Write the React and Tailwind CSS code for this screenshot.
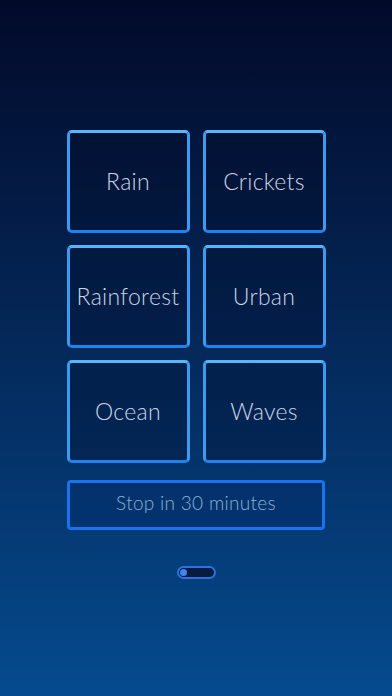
const SOUNDS = ['Rain', 'Crickets', 'Rainforest', 'Urban', 'Ocean', 'Waves']

function SoundTile({ label }) {
  return (
    <button className="flex h-[103px] items-center justify-center rounded-[5px] border-[3px] border-[#3a9bf2] border-t-[#58b6f8] border-b-[#1f82ef] bg-[#000a26]/30 text-[23px] font-light tracking-[0.3px] text-[#c9d5e8]">
      {label}
    </button>
  )
}

export default function App() {
  return (
    <div
      className="flex h-[696px] w-full flex-col items-center bg-gradient-to-b from-[#020a2a] to-[#054b8f] pt-[130px]"
      style={{ fontFamily: 'Lato, "Open Sans", sans-serif' }}
    >
      <div className="grid w-[259px] grid-cols-2 gap-x-[13px] gap-y-[12px]">
        {SOUNDS.map((s) => (
          <SoundTile key={s} label={s} />
        ))}
      </div>

      <button className="mt-[17px] flex h-[50px] w-[258px] items-center justify-center rounded-[4px] border-[3px] border-[#1a72f0] bg-[#002a66]/40 pb-[3px] text-[19px] font-light tracking-[0.3px] text-[#8fb0d6]">
        Stop in 30 minutes
      </button>

      <div className="mt-[36px] flex h-[13px] w-[39px] items-center rounded-full border-2 border-[#2c70e2] bg-[#071c3e] px-[1px]">
        <div className="h-[7px] w-[7px] rounded-full bg-[#3f85ee]" />
      </div>
    </div>
  )
}
